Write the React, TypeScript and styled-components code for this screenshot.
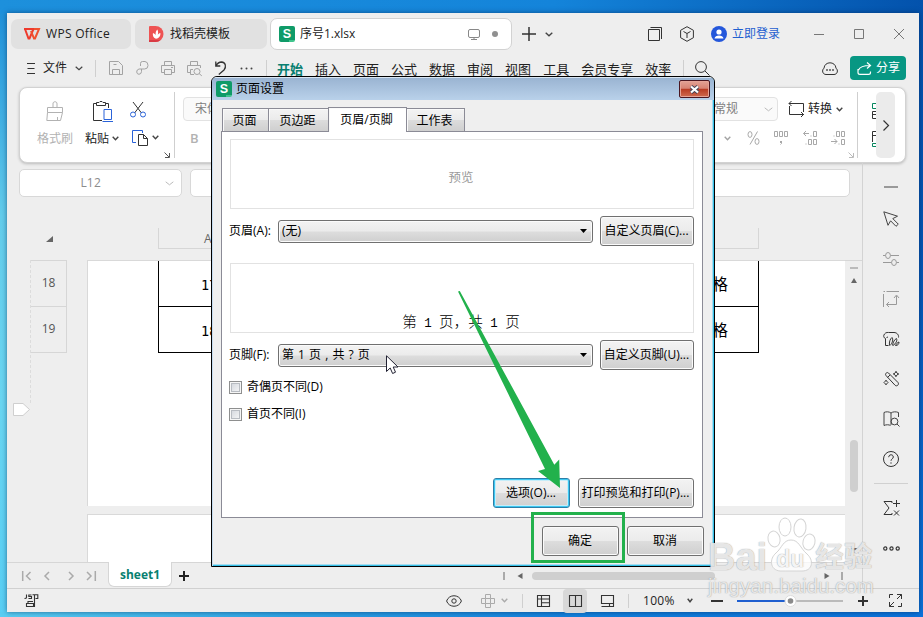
import React from "react";
import styled, { createGlobalStyle, css } from "styled-components";

const GlobalStyle = createGlobalStyle`
  *, *::before, *::after { box-sizing: border-box; }
  body { margin: 0; overflow: hidden; }
  svg { display: block; flex: none; overflow: visible; }
`;

/* ---------- Desktop and window shell ---------- */

const Desktop = styled.div`
  position: relative;
  width: 923px;
  height: 617px;
  padding: 13px 4px 5px 7px;
  overflow: hidden;
  font-family: "Open Sans", "Noto Sans CJK SC", sans-serif;
  font-size: 12px;
  line-height: 16px;
  white-space: nowrap;
  color: #222;
  background:
    linear-gradient(90deg, #1d90dc, #1484da 60%, #0352ac) 0 0 / 923px 13px no-repeat,
    linear-gradient(90deg, #58cdf2, #2ea4e4 30%, #1280dc 62%, #0b72da) 0 612px / 923px 5px no-repeat,
    linear-gradient(180deg, #1b8dd9, #39a9e2 15%, #63cdec 35%, #6ad6f2 65%, #58cff5) 0 0 / 8px 617px no-repeat,
    linear-gradient(180deg, #0352ac, #0556b4 40%, #0b72da) 100% 0 / 6px 617px no-repeat;
`;

const Window = styled.div`
  display: flex;
  flex-direction: column;
  width: 912px;
  height: 599px;
  background: #eee;
  box-shadow: 0 0 5px rgba(0, 30, 70, 0.55);
`;

const Gap = styled.div<{ $w?: number }>`
  flex: ${(p) => (p.$w ? `0 0 ${p.$w}px` : "1")};
`;

/* ---------- Title tabs ---------- */

const TitleBar = styled.div`
  display: flex;
  align-items: center;
  flex: none;
  height: 42px;
  padding: 0 15px 0 4px;
`;

const DocTab = styled.div<{ $w: number; $pad: number; $active?: boolean }>`
  display: flex;
  align-items: center;
  flex: none;
  width: ${(p) => p.$w}px;
  height: 30px;
  margin-right: 4px;
  padding-left: ${(p) => p.$pad}px;
  border-radius: 7px;
  background: #e1e1e1;
  ${(p) =>
    p.$active &&
    css`
      height: 32px;
      margin: 0 0 0 -1px;
      background: #fff;
      border: 1px solid #d2d2d2;
    `}
`;

const TabLabel = styled.span<{ $ml: number; $ls?: number }>`
  margin-left: ${(p) => p.$ml}px;
  letter-spacing: ${(p) => p.$ls ?? 0}px;
`;

const Account = styled.span`
  margin-left: 5px;
  color: #1f5fd0;
`;

/* ---------- Menu row ---------- */

const MenuBar = styled.div`
  display: flex;
  align-items: center;
  flex: none;
  height: 28px;
  padding: 0 13px 2px 20px;
`;

const Divider = styled.div<{ $h?: number }>`
  flex: none;
  width: 1px;
  height: ${(p) => p.$h ?? 17}px;
  background: #cfcfcf;
`;

const MenuTabs = styled.div`
  display: flex;
  gap: 12px;
  padding-top: 2px;
  font-size: 13px;
`;

const MenuTab = styled.span<{ $active?: boolean }>`
  color: ${(p) => (p.$active ? "#087f70" : "#222")};
  font-weight: ${(p) => (p.$active ? 700 : 400)};
`;

const ShareButton = styled.button`
  display: flex;
  align-items: center;
  gap: 4px;
  width: 56px;
  height: 24px;
  padding: 0 0 0 7px;
  border: 0;
  border-radius: 4px;
  background: #079783;
  color: #fff;
  font: inherit;
`;

/* ---------- Ribbon ---------- */

const Ribbon = styled.div`
  display: flex;
  align-items: center;
  flex: none;
  width: 887px;
  height: 76px;
  margin: 4px 0 0 12px;
  border: 1px solid #d2d2d2;
  border-radius: 8px;
  background: #fff;
  box-shadow: 0 1px 3px rgba(0, 0, 0, 0.22);
`;

const RibbonColumn = styled.div<{ $w: number; $align?: string }>`
  display: flex;
  flex-direction: column;
  flex: none;
  width: ${(p) => p.$w}px;
  height: 66px;
  align-items: ${(p) => p.$align ?? "center"};
`;

const RibbonLine = styled.div<{ $h: number; $muted?: boolean }>`
  display: flex;
  align-items: center;
  flex: none;
  height: ${(p) => p.$h}px;
  color: ${(p) => (p.$muted ? "#b2b2b2" : "#222")};
`;

const RibbonCombo = styled.div<{ $w: number }>`
  display: flex;
  align-items: center;
  justify-content: space-between;
  width: ${(p) => p.$w}px;
  height: 24px;
  padding: 0 4px 0 11px;
  border: 1px solid #e2e2e2;
  border-radius: 4px;
  background: #fafafa;
  color: #808080;
`;

const Bold = styled.span`
  font-weight: 600;
  font-size: 13px;
  color: #b2b2b2;
`;

const Corner = styled.div`
  display: flex;
  align-self: flex-end;
  padding-bottom: 4px;
`;

const ScrollButton = styled.div`
  display: grid;
  place-items: center;
  width: 19px;
  height: 66px;
  margin-right: 10px;
  border-radius: 5px;
  background: #ebebeb;
`;

const ClippedIcons = styled.div`
  display: flex;
  flex-direction: column;
  justify-content: space-between;
  width: 4px;
  height: 44px;
  overflow: hidden;
`;

/* ---------- Workspace ---------- */

const Body = styled.div`
  display: flex;
  flex: none;
  height: 425px;
`;

const Main = styled.div`
  display: flex;
  flex-direction: column;
  width: 855px;
`;

const FormulaBar = styled.div`
  display: flex;
  gap: 8px;
  flex: none;
  height: 35px;
  padding: 6px 0 0 12px;
`;

const Field = styled.div<{ $w: number }>`
  display: flex;
  align-items: center;
  justify-content: flex-end;
  width: ${(p) => p.$w}px;
  height: 28px;
  padding-right: 7px;
  border: 1px solid #d8d8d8;
  border-radius: 5px;
  background: #fff;
  color: #8c8c8c;
`;

const ColumnHeaders = styled.div`
  display: flex;
  align-items: flex-end;
  flex: none;
  height: 62px;
  padding: 0 0 11px 39px;
`;

const ColumnHeader = styled.div`
  width: 601px;
  height: 21px;
  margin-left: 105px;
  padding: 3px 0 0 45px;
  border: 1px solid #d6d6d6;
  border-top: 0;
  color: #666;
`;

const GridArea = styled.div`
  display: flex;
  flex: none;
  height: 302px;
`;

const RowHeaders = styled.div`
  display: flex;
  flex-direction: column;
  width: 80px;
  padding-left: 5px;
`;

const RowHeaderStack = styled.div`
  width: 37px;
  height: 143px;
  margin-left: 18px;
  border-left: 1px dashed #dcdcdc;
`;

const RowHeader = styled.div`
  height: 46px;
  padding-top: 14px;
  border-top: 1px solid #d6d6d6;
  border-right: 1px solid #d6d6d6;
  text-align: center;
  color: #555;
  &:last-child { height: 47px; border-bottom: 1px solid #d6d6d6; }
`;

const Pages = styled.div`
  width: 758px;
`;

const Page = styled.div<{ $h: number }>`
  height: ${(p) => p.$h}px;
  margin-bottom: 8px;
  padding-left: 70px;
  border: solid #d9d9d9;
  border-width: 1px 0 0 1px;
  background: #fff;
`;

const SheetRow = styled.div`
  display: flex;
  align-items: center;
  justify-content: space-between;
  width: 601px;
  height: 46px;
  padding: 2px 30px 0 42px;
  border: 1px solid #000;
  border-top: 0;
  color: #000;
  font-family: "DejaVu Sans Mono", "Noto Sans CJK SC", monospace;
  font-size: 13.5px;
`;

const CellWord = styled.span`
  font-size: 15.5px;
  font-weight: 400;
`;

const VScroll = styled.div`
  display: flex;
  flex-direction: column;
  align-items: center;
  width: 17px;
  border-top: 1px solid #d6d6d6;
`;

const Thumb = styled.div<{ $w: number; $h: number }>`
  flex: none;
  width: ${(p) => p.$w}px;
  height: ${(p) => p.$h}px;
  border-radius: 4px;
  background: #cfcfcf;
`;

const VGap = styled.div<{ $h: number }>`
  flex: 0 0 ${(p) => p.$h}px;
`;

const SheetBar = styled.div`
  display: flex;
  align-items: center;
  flex: none;
  height: 26px;
  border-top: 1px solid #d6d6d6;
`;

const SheetTab = styled.div`
  width: 64px;
  height: 25px;
  margin-top: -2px;
  padding-top: 5px;
  border: solid #d6d6d6;
  border-width: 0 1px 1px;
  border-radius: 0 0 6px 6px;
  background: #fff;
  color: #087f70;
  font-weight: 700;
  text-align: center;
`;

const SideBar = styled.div`
  display: flex;
  flex-direction: column;
  align-items: center;
  width: 57px;
  border-left: 1px solid #d3d3d3;
`;

const SideSlot = styled.div<{ $h: number }>`
  display: grid;
  place-items: center;
  flex: none;
  width: 34px;
  height: ${(p) => p.$h}px;
`;

const StatusBar = styled.div`
  display: flex;
  align-items: center;
  flex: none;
  height: 24px;
  border-top: 1px solid #d0d0d0;
`;

const ViewToggle = styled.div`
  display: grid;
  place-items: center;
  width: 24px;
  height: 24px;
  border-radius: 4px;
  background: #d8d8d8;
`;

/* ---------- Dialog ---------- */

const Dialog = styled.div`
  position: absolute;
  left: 211px;
  top: 76px;
  display: flex;
  flex-direction: column;
  width: 504px;
  height: 491px;
  border: 1px solid #000;
  border-radius: 6px 6px 0 0;
  background: #efefef;
  box-shadow: inset 1px 0 #c5dcf0, inset -1px -1px #35bfe6, inset -2px -2px #a8dcf0;
  color: #000;
  overflow: hidden;
`;

const DialogTitle = styled.div`
  display: flex;
  align-items: center;
  flex: none;
  height: 23px;
  padding: 0 4px 0 4px;
  border-top: 1px solid #d8e5f2;
  background: linear-gradient(#9ab4d2, #b9d1ea);
`;

const CloseButton = styled.button`
  display: grid;
  place-items: center;
  width: 31px;
  height: 18px;
  padding: 0;
  border: 1px solid #4a1620;
  border-radius: 2px;
  box-shadow: inset 0 0 0 1px #e5a397;
  background: linear-gradient(#e3a295 0, #d88373 46%, #b83a22 50%, #cf6b50 100%);
`;

const DialogTabs = styled.div`
  display: flex;
  align-items: flex-end;
  flex: none;
  height: 31px;
  padding-left: 10px;
`;

const DialogTab = styled.div<{ $w: number; $active?: boolean }>`
  width: ${(p) => p.$w}px;
  height: 23px;
  padding: 4px 2px 0 0;
  border: 1px solid #8b8b96;
  border-left-width: ${(p) => (p.$active ? 1 : 0)}px;
  border-bottom: 0;
  background: linear-gradient(#f3f3f3, #ebebeb 48%, #dcdcdc 52%, #cfcfcf);
  box-shadow: inset 1px 1px #fafafa;
  text-align: center;
  &:first-child { border-left-width: 1px; }
  ${(p) =>
    p.$active &&
    css`
      z-index: 1;
      height: 25px;
      margin: 0 0 -1px -1px;
      background: #fff;
    `}
`;

const DialogPanel = styled.div`
  display: flex;
  flex-direction: column;
  flex: none;
  width: 482px;
  height: 387px;
  margin-left: 9px;
  padding: 7px 8px 0;
  border: 1px solid #8b8b96;
  background: #fff;
`;

const Preview = styled.div<{ $bottom?: boolean }>`
  display: flex;
  flex: none;
  align-items: ${(p) => (p.$bottom ? "flex-end" : "center")};
  justify-content: center;
  width: 464px;
  height: 70px;
  padding: ${(p) => (p.$bottom ? "0 2px 1px 0" : "7px 2px 0 0")};
  border: 1px solid #e2e2e2;
  color: ${(p) => (p.$bottom ? "#000" : "#9a9a9a")};
  font-size: ${(p) => (p.$bottom ? 14.6 : 12.4)}px;
  font-weight: ${(p) => (p.$bottom ? 300 : 400)};
`;

const Num = styled.span`
  font: 12.4px "Liberation Mono", monospace;
  white-space: pre;
`;

const FormRow = styled.div<{ $mt: number }>`
  display: flex;
  align-items: center;
  flex: none;
  width: 464px;
  height: 30px;
  margin-top: ${(p) => p.$mt}px;
`;

const FieldLabel = styled.span`
  width: 48px;
  margin-left: -1px;
`;

const faceStyles = css`
  border: 1px solid #707070;
  border-radius: 3px;
  box-shadow: inset 0 0 0 1px #fbfbfb;
  background: linear-gradient(#f3f3f3 0, #ebebeb 49%, #dddddd 51%, #cfcfcf 100%);
`;

const Combo = styled.div`
  ${faceStyles}
  display: flex;
  align-items: center;
  justify-content: space-between;
  width: 315px;
  height: 23px;
  margin: 0 7px 0 1px;
  padding: 0 5px 0 3px;
  word-spacing: 1px;
`;

const PushButton = styled.button<{ $w: number; $focus?: boolean }>`
  ${faceStyles}
  flex: none;
  width: ${(p) => p.$w}px;
  height: 30px;
  padding: 0 1px 0 0;
  color: #000;
  font: inherit;
  text-align: center;
  white-space: nowrap;
  ${(p) =>
    p.$focus &&
    css`
      border-color: #2c7fa8;
      box-shadow: inset 0 0 0 1px #3cc8f2, inset 0 0 0 2px #c5edf9;
    `}
`;

const CheckRow = styled.label<{ $mt: number }>`
  display: flex;
  align-items: center;
  gap: 5px;
  height: 16px;
  margin: ${(p) => p.$mt}px 0 0 -1px;
`;

const CheckBox = styled.span`
  width: 13px;
  height: 13px;
  border: 1px solid #8e8f8f;
  box-shadow: inset 0 0 0 1px #f6f6f6, inset 0 0 0 2px #b8bcc2;
  background: linear-gradient(135deg, #cfd3da, #fafafa);
`;

const ButtonRow = styled.div<{ $mt: number; $pr: number }>`
  display: flex;
  justify-content: flex-end;
  gap: 8px;
  flex: none;
  margin-top: ${(p) => p.$mt}px;
  padding-right: ${(p) => p.$pr}px;
`;

/* ---------- Overlays ---------- */

const Highlight = styled.div`
  position: absolute;
  left: 531px;
  top: 512px;
  width: 94px;
  height: 51px;
  border: 3px solid #22b14c;
`;

const Overlay = styled.svg<{ $x: number; $y: number }>`
  position: absolute;
  left: ${(p) => p.$x}px;
  top: ${(p) => p.$y}px;
`;

const Watermark = styled.div`
  position: absolute;
  left: 708px;
  top: 518px;
  width: 168px;
  height: 80px;
  color: rgba(255, 255, 255, 0.75);
  text-shadow: 0 0 1px rgba(120, 120, 120, 0.55), 0 0 1px rgba(140, 140, 140, 0.5);
`;

const MarkLine = styled.div`
  display: flex;
  align-items: flex-end;
  height: 58px;
`;

const MarkWord = styled.span<{ $size: number; $ml?: number }>`
  margin-left: ${(p) => p.$ml ?? 0}px;
  font: 700 ${(p) => p.$size}px / 38px "Liberation Sans", "Noto Sans CJK SC", sans-serif;
`;

const MarkPaw = styled.div`
  position: relative;
  width: 48px;
  height: 58px;
`;

const MarkDu = styled.span`
  position: absolute;
  left: 9px;
  top: 29px;
  font: 700 23px / 24px "Liberation Sans", sans-serif;
  color: #f4f4f4;
`;

const MarkUrl = styled.div`
  font: 400 20.6px / 20px "Liberation Sans", sans-serif;
`;

/* ---------- Icons ---------- */

type IconProps = {
  w: number;
  h: number;
  d?: string;
  c?: string;
  s?: number;
  children?: React.ReactNode;
};

const Icon = ({ w, h, d, c = "#333", s = 1, children }: IconProps) => (
  <svg width={w} height={h} viewBox={`0 0 ${w} ${h}`} fill="none" stroke={c} strokeWidth={s}>
    {d && <path d={d} />}
    {children}
  </svg>
);

const Chevron = ({ c = "#444", w = 7, s = 1.4 }: { c?: string; w?: number; s?: number }) => (
  <Icon w={w} h={5} c={c} s={s} d={`M.7 .8L${w / 2} 3.8L${w - 0.7} .8`} />
);

const LauncherIcon = ({ c }: { c: string }) => (
  <Icon w={6} h={6} c={c} d="M.5 .5L5 5M5.5 1V5.5H1" />
);

const LogoTile = styled.span`
  display: grid;
  place-items: center;
  flex: none;
  width: 16px;
  height: 16px;
  padding-bottom: 1px;
  border-radius: 2px;
  background: linear-gradient(115deg, transparent 62%, #3fc48c 62%) 0 100% / 100% 2px no-repeat, #0f9b68;
  color: #fff;
  font: 700 12.5px / 14px "Liberation Sans", sans-serif;
`;

const SheetLogo = () => <LogoTile>S</LogoTile>;

const sideIcons = [
  { h: 40, icon: <Icon w={16} h={16} d="M.8 .8L14.500 5.200L9.800 7.600L15.300 13.200L13 15.300L7.600 9.800L5 14.300Z" c="#444" /> },
  {
    h: 40,
    icon: (
      <Icon w={16} h={14} c="#999">
        <path d="M0 3.500H2.500M7.500 3.500H16M0 10.500H8.500M13.500 10.500H16" />
        <ellipse cx="5" cy="3.500" rx="2.400" ry="3" />
        <ellipse cx="11" cy="10.500" rx="2.400" ry="3" />
      </Icon>
    ),
  },
  { h: 40, icon: <Icon w={16} h={16} c="#999" d="M.5 .5H2M3.500 .5H16M.5 3V16M13.500 5V13.500H3.500M11 7L13.500 4L16 7M6 11L3.500 13.500L6 16" /> },
  { h: 40, icon: <Icon w={16} h={16} c="#333" d="M5.500 14.500H2.500V7.500C.5 7 .2 4.500 1.500 3C3 1 5 1.500 7 1.500H11C14 1.500 16 4 15.500 6.500M5 6L3.500 6.500M6.500 14.500C6 11 7 8 9 6.500C10.500 8 9.500 12 7 14.500M9.500 14.500C10 11 11.500 8.500 13.500 7.500C14.500 9.500 13 12.500 10 14.500M12.500 14.500C13.500 12.500 14.500 11.500 16 11C16 13 15 14.500 12.500 14.500" /> },
  {
    h: 40,
    icon: (
      <Icon w={16} h={16} c="#333">
        <path d="M3 4.500C1.500 3 4 .5 5.500 2L15 11.500C16.500 13.500 13.800 16 12 14.200ZM7 4L4.500 6.500" />
        <path d="M13 .8L15.200 3L13 5.200L10.800 3ZM3 9.500L5 11.500L3 13.500L1 11.500Z" />
        <path d="M13 0V1.500M13 4.500V6M10 3H11.500M14.500 3H16M3 9V10M3 13V14" />
      </Icon>
    ),
  },
  {
    h: 40,
    icon: (
      <Icon w={17} h={16} c="#444">
        <path d="M7.500 14.500C6 13.500 3 13.500 1 14.500V1.500C3 .5 6 .5 8 2C10 .5 13 .5 15.500 1.500V6M8 2V14" />
        <circle cx="11.500" cy="10.500" r="3.400" />
        <path d="M14 13L16.500 15.500" />
      </Icon>
    ),
  },
  {
    h: 40,
    icon: (
      <Icon w={16} h={16} c="#333">
        <circle cx="8" cy="8" r="7.500" />
        <path d="M5.700 6.200C5.700 3 10.300 3 10.300 6C10.300 8 8 7.800 8 9.800M8 11.300V12.700" />
      </Icon>
    ),
  },
  { h: 9, icon: <Icon w={34} h={1} c="#d0d0d0" d="M0 .5H34" /> },
  { h: 40, icon: <Icon w={17} h={16} c="#333" d="M9 3V1.500H1L6 8L1 14.500H9V13M10 3.500H17M13.500 0V7M11 10.500L16 15.500M16 10.500L11 15.500" /> },
  {
    h: 40,
    icon: (
      <Icon w={17} h={5} c="#333" s={1.2}>
        <circle cx="2.300" cy="2.500" r="1.600" />
        <circle cx="8.500" cy="2.500" r="1.600" />
        <circle cx="14.700" cy="2.500" r="1.600" />
      </Icon>
    ),
  },
];

const menus = ["开始", "插入", "页面", "公式", "数据", "审阅", "视图", "工具", "会员专享", "效率"];

/* ---------- Sections ---------- */

const TitleSection = () => (
  <TitleBar>
    <DocTab $w={120} $pad={13}>
      <svg width="16" height="12" viewBox="0 0 16 12" fill="none" stroke="#ee3a2c" strokeWidth="2">
        <path d="M0 1H9.500L5.500 10.500H4.500L1 1" />
        <path d="M7 3L10 10.500H11L15 1H10" stroke="#f0512e" />
      </svg>
      <TabLabel $ml={6} $ls={0.3}>WPS Office</TabLabel>
    </DocTab>
    <DocTab $w={132} $pad={14}>
      <svg width="15" height="16" viewBox="0 0 15 16">
        <path d="M1 0H6.500A8 8 0 0 1 6.500 16H0V1Q0 0 1 0Z" fill="#ee5353" />
        <path d="M0 14H11.500A8 8 0 0 1 6.500 16H0Z" fill="#d93b44" />
        <path d="M7 12.800C4 11.500 3.500 9 4 7C5.500 7.500 6.300 8.300 6.800 9.300C6.300 6.800 6.800 5 8.300 3.500C9.300 5 9.300 6.800 8.800 8.800C9.300 7.800 10 7.300 11.300 7C11.800 9.500 10.500 12 7 12.800Z" fill="#fff" />
      </svg>
      <TabLabel $ml={6}>找稻壳模板</TabLabel>
    </DocTab>
    <DocTab $w={242} $pad={8} $active>
      <SheetLogo />
      <TabLabel $ml={5}>序号1.xlsx</TabLabel>
      <Gap />
      <Icon w={12} h={11} c="#888" d="M2 .5H10Q11.500 .5 11.500 2V7Q11.500 8.500 10 8.500H2Q.5 8.500 .5 7V2Q.5 .5 2 .5ZM6 8.500V10.500M3 10.500H9" />
      <Gap $w={12} />
      <svg width="6" height="6"><circle cx="3" cy="3" r="3" fill="#909090" /></svg>
      <Gap $w={13} />
    </DocTab>
    <Gap $w={10} />
    <Icon w={14} h={14} s={1.5} d="M7 0V14M0 7H14" />
    <Gap $w={9} />
    <Chevron w={8} />
    <Gap />
    <Icon w={14} h={14} d="M.5 2.500H11.500V13.500H.5ZM2.500 .5H13.500V12" />
    <Gap $w={18} />
    <Icon w={14} h={16} d="M7 .7L13.400 4.300V11.700L7 15.300L.6 11.700V4.300ZM3.500 5.500L7 7.500L10.500 5.500M7 7.500V12" />
    <Gap $w={17} />
    <svg width="16" height="16" viewBox="0 0 16 16">
      <circle cx="8" cy="8" r="8" fill="#2457db" />
      <circle cx="8" cy="6" r="2.600" fill="#fff" />
      <path d="M3.500 12.500C4 8.500 12 8.500 12.500 12.500Z" fill="#fff" />
    </svg>
    <Account>立即登录</Account>
    <Gap $w={34} />
    <Icon w={10} h={1} c="#777" d="M0 .5H10" />
    <Gap $w={30} />
    <Icon w={10} h={10} c="#777" d="M.5 .5H9.500V9.500H.5Z" />
    <Gap $w={30} />
    <Icon w={10} h={10} c="#777" d="M0 0L10 10M10 0L0 10" />
  </TitleBar>
);

const MenuSection = () => (
  <MenuBar>
    <Icon w={8} h={11} d="M0 .5H8M.5 5.500H7.500M0 10.500H8" />
    <Gap $w={8} />
    <span>文件</span>
    <Gap $w={8} />
    <Chevron w={8} s={1.2} />
    <Gap $w={12} />
    <Divider />
    <Gap $w={13} />
    <Icon w={14} h={14} c="#a3a3a3" d="M.5 .5H9.500L13.500 4.500V13.500H.5ZM4.500 3.500H7.500M3.500 13V8.500H10.500V13" />
    <Gap $w={13} />
    <Icon w={13} h={14} c="#a3a3a3" d="M4.500 5V2.500Q4.500 .5 6.500 .5H9Q12 .8 12 4.500Q12 8 8.500 8H3Q.7 8.500 .7 11Q1 13.300 3 13.300Q5.500 13 5.500 10.500V8" />
    <Gap $w={12} />
    <Icon w={14} h={14} c="#a3a3a3" d="M3.500 4.500V.5H10.500V4.500M3 11.500H.5V4.500H13.500V11.500H11M3.500 8.500H10.500V13.500H3.500ZM10 6.500H12" />
    <Gap $w={12} />
    <Icon w={16} h={15} c="#a3a3a3">
      <path d="M3.500 4.500V.5H10.500V4.500M3 11.500H.5V4.500H13.500V7M6 8.500H3.500V13.500H7" />
      <circle cx="10" cy="10.500" r="3" />
      <path d="M12.200 12.700L14.800 14.800" />
    </Icon>
    <Gap $w={12} />
    <Icon w={12} h={14} s={1.3} d="M.8 .5V5H5.300M.8 5C2.500 2 4.500 1 6.500 1C10.800 1.200 11.500 6 9 9L3.800 13.500" />
    <Gap $w={13} />
    <svg width="13" height="3" fill="#444">
      <circle cx="1.500" cy="1.500" r="1" /><circle cx="6.500" cy="1.500" r="1" /><circle cx="11.500" cy="1.500" r="1" />
    </svg>
    <Gap $w={13} />
    <Divider />
    <Gap $w={10} />
    <MenuTabs>
      {menus.map((m, i) => <MenuTab key={m} $active={i === 0}>{m}</MenuTab>)}
    </MenuTabs>
    <Gap $w={12} />
    <Divider />
    <Gap $w={11} />
    <Icon w={15} h={15}><circle cx="6" cy="6" r="5.400" /><path d="M10 10L14.500 14.500" /></Icon>
    <Gap />
    <Icon w={16} h={13}>
      <path d="M4 12.500C.5 12.500 -.5 8 2 6.200C2.500 -1 13.500 -1 14 6.200C16.500 8 15.500 12.500 12 12.500Z" />
      <path d="M4.200 8H5.800M7.200 8H8.800M10.200 8H11.800" strokeWidth="1.600" />
    </Icon>
    <Gap $w={12} />
    <ShareButton>
      <Icon w={15} h={13} c="#fff" s={1.2} d="M1 7V10.500Q1 12.400 3 12.400H11.500Q13.500 12.400 13.500 10.500V9.500M1.500 8C3 4.500 7 3.500 13 3.500M10 .5L13.500 3.500L10 6.500" />
      <span>分享</span>
    </ShareButton>
  </MenuBar>
);

const RibbonSection = () => (
  <Ribbon>
    <Gap $w={13} />
    <RibbonColumn $w={44}>
      <RibbonLine $h={38}>
        <Icon w={18} h={20} c="#b2b2b2" d="M1.500 6.500H16.500V11.500H1.500ZM7 6.500V3C6.500 0 11.500 0 11 3V6.500M1.500 11.500L.8 19.500H14.500L16.500 11.500M11.500 16V19" />
      </RibbonLine>
      <RibbonLine $h={17} $muted>格式刷</RibbonLine>
    </RibbonColumn>
    <Gap $w={8} />
    <RibbonColumn $w={34}>
      <RibbonLine $h={38}>
        <Icon w={21} h={21}>
          <path d="M10 19.500H1.500V2.500H4.500M13.500 2.500H16.500V7M4.500 4.500V1.500H7L8 .5H10L11 1.500H13.500V4.500Z" />
          <path d="M12 8.500H19.500V18.500H12ZM10.500 20.500H21" stroke="#2a63d9" />
        </Icon>
      </RibbonLine>
      <RibbonLine $h={17}>粘贴<Gap $w={3} /><Chevron w={7} /></RibbonLine>
    </RibbonColumn>
    <Gap $w={11} />
    <RibbonColumn $w={29} $align="flex-start">
      <RibbonLine $h={36}>
        <Icon w={16} h={16}>
          <path d="M3 0L11.500 11M13 0L4.500 11" />
          <circle cx="3" cy="12.500" r="2.500" stroke="#2a63d9" />
          <circle cx="13" cy="12.500" r="2.500" stroke="#2a63d9" />
        </Icon>
      </RibbonLine>
      <RibbonLine $h={19}>
        <Gap $w={2} />
        <Icon w={17} h={16}>
          <path d="M4 12.500H.5V.5H10.500V3" stroke="#2a63d9" />
          <path d="M6.500 4.500H11.500L15.500 8.500V15.500H6.500ZM11.500 4.500V8.500H15.500" />
        </Icon>
        <Gap $w={3} /><Chevron w={7} />
      </RibbonLine>
    </RibbonColumn>
    <Gap $w={5} />
    <Corner><LauncherIcon c="#555" /></Corner>
    <Gap $w={4} />
    <Divider $h={66} />
    <Gap $w={8} />
    <RibbonColumn $w={120} $align="flex-start">
      <VGap $h={5} />
      <RibbonCombo $w={110}>宋体</RibbonCombo>
      <VGap $h={8} />
      <RibbonLine $h={18}><Gap $w={7} /><Bold>B</Bold></RibbonLine>
    </RibbonColumn>
    <Gap />
    <RibbonColumn $w={150} $align="flex-end">
      <VGap $h={5} />
      <RibbonLine $h={24}>
        <RibbonCombo $w={76}>常规<Chevron c="#bbb" w={9} s={1} /></RibbonCombo>
        <Gap $w={10} />
        <Icon w={17} h={16} d="M1.500 5V13.500H16M13 11L15.500 13.500L13 16M15.500 11V2.500H1M3.500 0L1 2.500L3.500 5" />
        <Gap $w={3} />
        <span>转换</span>
        <Gap $w={4} />
        <Chevron w={7} />
        <Gap $w={3} />
      </RibbonLine>
      <VGap $h={8} />
      <RibbonLine $h={18}>
        <Chevron c="#a3a3a3" w={7} />
        <Gap $w={16} />
        <Icon w={13} h={14} c="#a8a8a8">
          <ellipse cx="3" cy="3.500" rx="2" ry="2.900" /><ellipse cx="10" cy="10.500" rx="2" ry="2.900" /><path d="M10.500 .5L3 13.500" />
        </Icon>
        <Gap $w={14} />
        <Icon w={15} h={14} c="#a8a8a8" d="M.5 .5H3.500V5.500H.5ZM5.500 .5H8.500V5.500H5.500ZM10.500 .5H13.500V5.500H10.500ZM7.500 10V12.500L6.500 13.500M6.500 10V12" />
        <Gap $w={14} />
        <Icon w={15} h={14} c="#a8a8a8" d="M6 2.500H.5M3 0L.5 2.500L3 5M7.500 5H8.500M10.500 .5H13.500V5.500H10.500ZM2.500 13H3.500M5.500 8.500H8.500V13.500H5.500ZM10.500 8.500H13.500V13.500H10.500Z" />
        <Gap $w={13} />
        <Icon w={15} h={14} c="#a8a8a8" d="M2.500 5H3.500M5.500 .5H8.500V5.500H5.500ZM10.500 .5H13.500V5.500H10.500ZM0 10.500H6M3.500 8L6 10.500L3.500 13M7.500 13H8.500M10.500 8.500H13.500V13.500H10.500Z" />
      </RibbonLine>
    </RibbonColumn>
    <Gap $w={2} />
    <Corner><LauncherIcon c="#bbb" /></Corner>
    <Gap $w={3} />
    <Divider $h={66} />
    <Gap $w={14} />
    <ClippedIcons>
      <Icon w={16} h={16}><path d="M15 .5H.5V5.500H15" stroke="#07875f" /><path d="M15 8.500H.5V15.500H15M.5 11.500H4" /></Icon>
      <Icon w={16} h={16}><path d="M15 .5H.5V11M.5 4.500H4" /><path d="M15 12.500H.5V15.500H15" stroke="#07875f" /></Icon>
    </ClippedIcons>
    <ScrollButton><Icon w={6} h={11} s={1.2} d="M.5 .5L5.500 5.500L.5 10.500" /></ScrollButton>
  </Ribbon>
);

const SheetBarSection = () => (
  <SheetBar>
    <Gap $w={15} />
    <Icon w={10} h={10} c="#aaa" s={1.5} d="M.7 0V10M8.500 1L4.500 5L8.500 9" />
    <Gap $w={12} />
    <Icon w={6} h={10} c="#aaa" s={1.5} d="M5 1L1 5L5 9" />
    <Gap $w={18} />
    <Icon w={6} h={10} c="#aaa" s={1.5} d="M1 1L5 5L1 9" />
    <Gap $w={12} />
    <Icon w={10} h={10} c="#aaa" s={1.5} d="M1 1L5 5L1 9M9.300 0V10" />
    <Gap $w={12} />
    <SheetTab>sheet1</SheetTab>
    <Gap $w={7} />
    <Icon w={10} h={10} s={2} c="#222" d="M5 0V10M0 5H10" />
    <Gap $w={314} />
    <Icon w={2} h={8} c="#aaa" s={2} d="M1 0V8" />
    <Gap $w={12} />
    <svg width="6" height="6"><path d="M5.500 0V6L.5 3Z" fill="#666" /></svg>
    <Gap $w={9} />
    <Thumb $w={183} $h={8} />
    <Gap $w={109} />
    <svg width="6" height="6"><path d="M.5 0V6L5.500 3Z" fill="#666" /></svg>
    <Gap $w={11} />
    <Icon w={2} h={8} c="#aaa" s={2} d="M1 0V8" />
  </SheetBar>
);

const BodySection = () => (
  <Body>
    <Main>
      <FormulaBar>
        <Field $w={163}><TabLabel $ml={0} $ls={0.2}>L12</TabLabel><Gap $w={64} /><Chevron c="#bbb" w={9} s={1} /></Field>
        <Field $w={660} />
      </FormulaBar>
      <ColumnHeaders>
        <svg width="7" height="14"><path d="M7 1V7H0Z" fill="#666" /></svg>
        <ColumnHeader>A</ColumnHeader>
      </ColumnHeaders>
      <GridArea>
        <RowHeaders>
          <RowHeaderStack>
            <RowHeader>18</RowHeader>
            <RowHeader>19</RowHeader>
          </RowHeaderStack>
          <Icon w={19} h={13} c="#cfcfcf">
            <path d="M1.500 .5H11L17.500 6.500L11 12.500H1.500Z" fill="#fff" />
          </Icon>
        </RowHeaders>
        <Pages>
          <Page $h={246}>
            <SheetRow>17<CellWord>合格</CellWord></SheetRow>
            <SheetRow>18<CellWord>合格</CellWord></SheetRow>
          </Page>
          <Page $h={48} />
        </Pages>
        <VScroll>
          <VGap $h={6} />
          <Icon w={8} h={2} c="#bbb" s={2} d="M0 1H8" />
          <VGap $h={9} />
          <svg width="6" height="5"><path d="M3 0L6 5H0Z" fill="#666" /></svg>
          <VGap $h={157} />
          <Thumb $w={8} $h={52} />
          <VGap $h={56} />
          <svg width="6" height="5"><path d="M3 5L6 0H0Z" fill="#666" /></svg>
        </VScroll>
      </GridArea>
      <SheetBarSection />
    </Main>
    <SideBar>
      <VGap $h={23} />
      <Icon w={14} h={2} c="#999" s={2} d="M0 1H14" />
      <VGap $h={11} />
      {sideIcons.map((s, i) => <SideSlot key={i} $h={s.h}>{s.icon}</SideSlot>)}
    </SideBar>
  </Body>
);

const StatusSection = () => (
  <StatusBar>
    <Gap $w={17} />
    <Icon w={15} h={14} s={1.1} d="M2.500 .5V3.500Q2.500 4.500 .5 4.500M7.500 1H4.800V2.500H7.500V4.500H4.500M8.500 .8H13.800V4.500H11.500M10.500 .8V12.500H2.500V9.500H9.500V12.500M4 9V7.500H9" />
    <Gap $w={407} />
    <Icon w={16} h={12}><path d="M.6 6C3 -1 13 -1 15.400 6C13 13 3 13 .6 6Z" /><circle cx="8" cy="6" r="2.200" /></Icon>
    <Gap $w={19} />
    <Icon w={14} h={14} c="#aaa" d="M4.500 4.500V.5H9.500V4.500H13.500V9.500H9.500V13.500H4.500V9.500H.5V4.500H4.500M4.500 4.500H9.500V9.500H4.500Z" />
    <Gap $w={6} />
    <Chevron c="#aaa" w={7} />
    <Gap $w={14} />
    <Divider $h={14} />
    <Gap $w={14} />
    <Icon w={13} h={12} s={1.1} d="M.5 .5H12.500V11.500H.5ZM.5 4H12.500M4.500 .5V11.500M4.500 7.700H12.500" />
    <Gap $w={13} />
    <ViewToggle><Icon w={13} h={12} s={1.1} d="M.5 .5H12.500V11.500H.5ZM6.500 .5V11.500" /></ViewToggle>
    <Gap $w={14} />
    <Icon w={13} h={12} s={1.1} d="M.5 .5H12.500V8.500H.5ZM.5 11.500H12.500M8.500 8.500V11.500M12.500 8V12" />
    <Gap $w={14} />
    <Divider $h={14} />
    <Gap $w={14} />
    <TabLabel $ml={0} $ls={0.3}>100%</TabLabel>
    <Gap />
    <Chevron w={6} />
    <Gap $w={18} />
    <Icon w={12} h={2} s={2} d="M0 1H12" />
    <Gap $w={14} />
    <svg width="106" height="12">
      <path d="M0 6H106" stroke="#bbb" strokeWidth="2" />
      <path d="M0 6H53" stroke="#1f5fd0" strokeWidth="2" />
      <circle cx="53.500" cy="6" r="5.500" fill="#fff" stroke="#ddd" />
      <circle cx="53.500" cy="6" r="2.800" fill="#8a8a8a" />
    </svg>
    <Gap $w={15} />
    <Icon w={10} h={10} s={2} d="M5 0V10M0 5H10" />
    <Gap $w={21} />
    <Icon w={13} h={13} d="M.5 4V.5H4M8 .5H12.500V5M12.500 .5L8 5M12.500 9V12.500H9M5 12.500H.5V8M.5 12.500L5 8" />
    <Gap $w={17} />
  </StatusBar>
);

const DropArrow = () => (
  <svg width="7" height="4"><path d="M0 0H7L3.500 4Z" fill="#000" /></svg>
);

const PageSetupDialog = () => (
  <Dialog>
    <DialogTitle>
      <SheetLogo />
      <Gap $w={4} />
      <span>页面设置</span>
      <Gap />
      <CloseButton aria-label="close">
        <svg width="11" height="9" viewBox="0 0 11 9">
          <path d="M2 1.500L9 7.500M9 1.500L2 7.500" stroke="#43455a" strokeWidth="4" />
          <path d="M2 1.500L9 7.500M9 1.500L2 7.500" stroke="#fff" strokeWidth="2.200" />
        </svg>
      </CloseButton>
    </DialogTitle>
    <DialogTabs>
      <DialogTab $w={47}>页面</DialogTab>
      <DialogTab $w={60}>页边距</DialogTab>
      <DialogTab $w={79} $active>页眉/页脚</DialogTab>
      <DialogTab $w={58}>工作表</DialogTab>
    </DialogTabs>
    <DialogPanel>
      <Preview>预览</Preview>
      <FormRow $mt={7}>
        <FieldLabel>页眉(A):</FieldLabel>
        <Combo>(无)<DropArrow /></Combo>
        <PushButton $w={94}>自定义页眉(C)...</PushButton>
      </FormRow>
      <VGap $h={17} />
      <Preview $bottom>
        <span>第<Num> 1 </Num>页，共<Num> 1 </Num>页</span>
      </Preview>
      <FormRow $mt={7}>
        <FieldLabel>页脚(F):</FieldLabel>
        <Combo><span>第 1 页 , 共 ? 页</span><DropArrow /></Combo>
        <PushButton $w={94}>自定义页脚(U)...</PushButton>
      </FormRow>
      <CheckRow $mt={9}><CheckBox />奇偶页不同(D)</CheckRow>
      <CheckRow $mt={11}><CheckBox />首页不同(I)</CheckRow>
      <ButtonRow $mt={56} $pr={0}>
        <PushButton $w={77} $focus>选项(O)...</PushButton>
        <PushButton $w={116}>打印预览和打印(P)...</PushButton>
      </ButtonRow>
    </DialogPanel>
    <ButtonRow $mt={8} $pr={10}>
      <PushButton $w={77}>确定</PushButton>
      <PushButton $w={77}>取消</PushButton>
    </ButtonRow>
  </Dialog>
);

const WatermarkSection = () => (
  <Watermark>
    <MarkLine>
      <MarkWord $size={38}>Bai</MarkWord>
      <MarkPaw>
        <svg width="48" height="56" fill="rgba(255,255,255,.75)" stroke="#d4d4d4">
          <ellipse cx="7" cy="21" rx="6" ry="8" transform="rotate(-12 7 21)" />
          <ellipse cx="18" cy="9" rx="6" ry="9" />
          <ellipse cx="33" cy="10" rx="6" ry="9" transform="rotate(8 33 10)" />
          <ellipse cx="42" cy="24" rx="6" ry="8" transform="rotate(14 42 24)" />
          <path d="M24 22C16 22 15 30 9 35C2 41 3 52 13 53C19 53 29 53 35 53C46 53 47 42 40 36C33 30 32 22 24 22Z" />
        </svg>
        <MarkDu>du</MarkDu>
      </MarkPaw>
      <MarkWord $size={28.500}>经验</MarkWord>
    </MarkLine>
    <MarkUrl>jingyan.baidu.com</MarkUrl>
  </Watermark>
);

export default function App() {
  return (
    <>
      <GlobalStyle />
      <Desktop>
        <Window>
          <TitleSection />
          <MenuSection />
          <RibbonSection />
          <BodySection />
          <StatusSection />
        </Window>
        <PageSetupDialog />
        <Highlight />
        <Overlay $x={456} $y={289} width="108" height="202">
          <path d="M2 2.500L3.800 2L98.300 175.700L103.200 170.500L104 199L82 182L89 180Z" fill="#22b14c" />
        </Overlay>
        <Overlay $x={386} $y={355} width="13" height="20">
          <path d="M.5 .8V16.500L4.200 13L6.600 18.500L9.500 17.200L7.200 12H12Z" fill="#fff" stroke="#222233" />
        </Overlay>
        <WatermarkSection />
      </Desktop>
    </>
  );
}
